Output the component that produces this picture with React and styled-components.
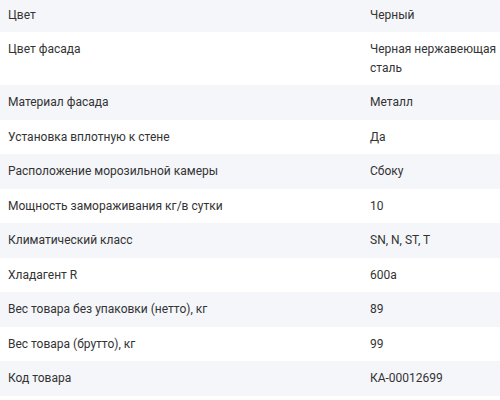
import React from "react";
import styled, { createGlobalStyle } from "styled-components";

const Global = createGlobalStyle`
  html, body { margin: 0; padding: 0; background: #ffffff; }
  body { font-family: Roboto, "Noto Sans", sans-serif; overflow: hidden; }
`;

const Table = styled.div`
  display: flex;
  flex-direction: column;
  width: 500px;
  margin-top: -2.5px;
`;

const Row = styled.div`
  display: grid;
  grid-template-columns: 362px 1fr;
  padding: 8px 0 8px 8px;
  background: ${(p) => (p.$shaded ? "#f5f6fa" : "#ffffff")};
  font-size: 12px;
  line-height: 18.5px;
  color: #333333;
`;

const Label = styled.div``;
const Value = styled.div`
  width: 140px;
`;

const rows = [
  ["Цвет", "Черный"],
  ["Цвет фасада", "Черная нержавеющая сталь"],
  ["Материал фасада", "Металл"],
  ["Установка вплотную к стене", "Да"],
  ["Расположение морозильной камеры", "Сбоку"],
  ["Мощность замораживания кг/в сутки", "10"],
  ["Климатический класс", "SN, N, ST, T"],
  ["Хладагент R", "600a"],
  ["Вес товара без упаковки (нетто), кг", "89"],
  ["Вес товара (брутто), кг", "99"],
  ["Код товара", "КА-00012699"],
];

export default function App() {
  return (
    <>
      <Global />
      <Table>
        {rows.map(([l, v], i) => (
          <Row key={i} $shaded={i % 2 === 0}>
            <Label>{l}</Label>
            <Value>{v}</Value>
          </Row>
        ))}
      </Table>
    </>
  );
}
